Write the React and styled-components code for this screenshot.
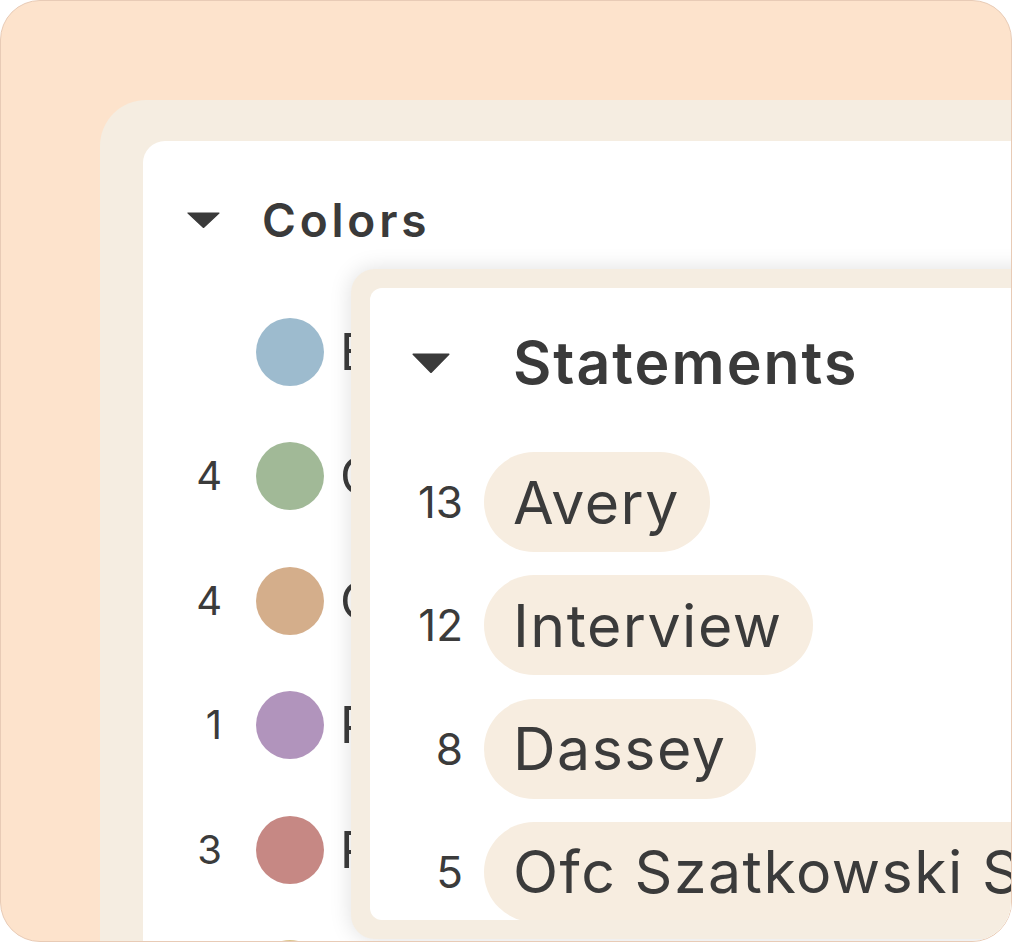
import React from "react";
import styled, { createGlobalStyle } from "styled-components";

const Global = createGlobalStyle`
  html, body { margin: 0; padding: 0; background: #ffffff; }
  body { font-family: Inter, "Noto Sans", sans-serif; color: #3b3b3b; }
  * { box-sizing: border-box; }
`;

const Frame = styled.div`
  position: relative;
  width: 1012px;
  height: 942px;
  border: 1px solid #e8cbb6;
  border-radius: 40px;
  background: #fde3cc;
  overflow: hidden;
  padding: 99px 0 0 99px;
`;

const CreamPanel = styled.div`
  width: 1000px;
  height: 1000px;
  background: #f5ede1;
  border-radius: 46px;
  padding: 41px 0 0 43px;
`;

const WhitePanel = styled.div`
  width: 100%;
  height: 100%;
  background: #ffffff;
  border-radius: 22px;
  padding: 53px 0 0 44px;
  display: flex;
  flex-direction: column;
`;

const SectionHeader = styled.div`
  display: flex;
  align-items: center;
  gap: ${(p) => p.$gap}px;
  font-size: ${(p) => p.$size}px;
  line-height: ${(p) => p.$lh}px;
  letter-spacing: ${(p) => p.$ls}px;
  font-weight: 600;
  color: #3a3a3a;
`;

const Caret = ({ w, h }) => (
  <svg width={w} height={h} viewBox="0 0 33 16" preserveAspectRatio="none" style={{ flex: "none" }}>
    <path d="M1 1 L32 1 L16.5 15.5 Z" fill="#3a3a3a" stroke="#3a3a3a" strokeWidth="1.2" strokeLinejoin="round" />
  </svg>
);

const ColorList = styled.div`
  display: flex;
  flex-direction: column;
  gap: 56.4px;
  margin-top: 72px;
`;

const ColorRow = styled.div`
  display: flex;
  align-items: center;
  height: 68px;
`;

const ColorCount = styled.span`
  width: 35px;
  text-align: right;
  font-size: 40px;
  line-height: 48px;
  color: #3b3b3b;
  margin-right: 34px;
`;

const Swatch = styled.span`
  width: 68px;
  height: 68px;
  border-radius: 50%;
  background: ${(p) => p.$color};
  flex: none;
  margin-right: 16px;
`;

const ColorLabel = styled.span`
  font-size: 50px;
  line-height: 60px;
  color: #3b3b3b;
  white-space: nowrap;
`;

const StatementsPanel = styled.div`
  position: absolute;
  left: 350px;
  top: 268px;
  width: 720px;
  height: 670px;
  padding: 19px;
  background: #f5ede1;
  border-radius: 24px;
  box-shadow: 0 0 22px rgba(0, 0, 0, 0.13);
`;

const StatementsInner = styled.div`
  width: 100%;
  height: 100%;
  background: #ffffff;
  border-radius: 12px;
  overflow: hidden;
  padding: 39px 0 0 42px;
`;

const PillList = styled.div`
  display: flex;
  flex-direction: column;
  gap: 23.3px;
  margin-top: 53px;
`;

const PillRow = styled.div`
  display: flex;
  align-items: center;
`;

const PillCount = styled.span`
  width: 51px;
  text-align: right;
  font-size: 44px;
  line-height: 52px;
  color: #3b3b3b;
  margin-right: 21px;
  flex: none;
`;

const Pill = styled.span`
  height: 100px;
  display: inline-flex;
  align-items: center;
  padding: 0 30px 0 29px;
  border-radius: 50px;
  background: #f7ede0;
  font-size: 59px;
  letter-spacing: 1.5px;
  color: #3b3b3b;
  white-space: nowrap;
  flex: none;
`;

const colors = [
  { n: "", name: "Blue", c: "#9dbbce" },
  { n: "4", name: "Green", c: "#a1b997" },
  { n: "4", name: "Orange", c: "#d4ae8b" },
  { n: "1", name: "Purple", c: "#b194bc" },
  { n: "3", name: "Red", c: "#c68884" },
  { n: "2", name: "Yellow", c: "#dcc48c" },
];

const statements = [
  { n: "13", name: "Avery" },
  { n: "12", name: "Interview" },
  { n: "8", name: "Dassey" },
  { n: "5", name: "Ofc Szatkowski Statement" },
];

export default function App() {
  return (
    <>
      <Global />
      <Frame>
        <CreamPanel>
          <WhitePanel>
            <SectionHeader $gap={42} $size={46} $lh={52} $ls={3.8}>
              <Caret w={33} h={16} />
              Colors
            </SectionHeader>
            <ColorList>
              {colors.map((c) => (
                <ColorRow key={c.name}>
                  <ColorCount>{c.n}</ColorCount>
                  <Swatch $color={c.c} />
                  <ColorLabel>{c.name}</ColorLabel>
                </ColorRow>
              ))}
            </ColorList>
          </WhitePanel>
        </CreamPanel>
        <StatementsPanel>
          <StatementsInner>
            <SectionHeader $gap={63} $size={59} $lh={72} $ls={2}>
              <Caret w={38} h={20} />
              Statements
            </SectionHeader>
            <PillList>
              {statements.map((s) => (
                <PillRow key={s.name}>
                  <PillCount>{s.n}</PillCount>
                  <Pill>{s.name}</Pill>
                </PillRow>
              ))}
            </PillList>
          </StatementsInner>
        </StatementsPanel>
      </Frame>
    </>
  );
}
